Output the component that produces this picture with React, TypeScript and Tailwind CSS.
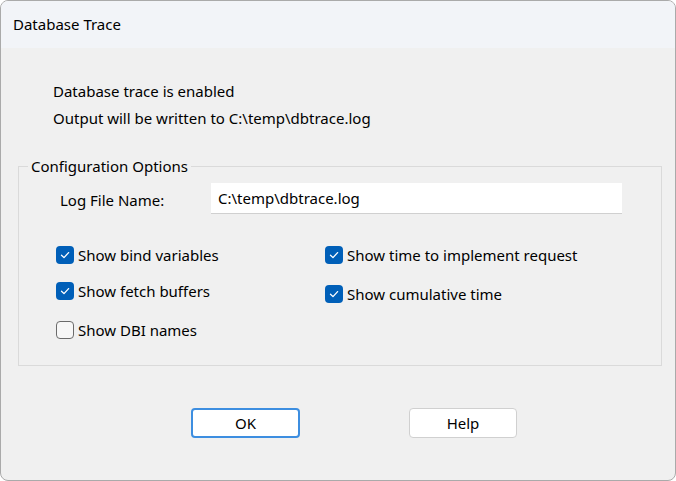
import React from "react";

function Check({ checked }: { checked: boolean }) {
  if (checked) {
    return (
      <span className="flex h-[18px] w-[18px] shrink-0 items-center justify-center rounded-[4px] bg-[#005fb8]">
        <svg width="12" height="12" viewBox="0 0 12 12" fill="none">
          <path d="M2.5 6.2 L5 8.6 L9.6 3.6" stroke="#ffffff" strokeWidth="1.3" strokeLinecap="round" strokeLinejoin="round" />
        </svg>
      </span>
    );
  }
  return <span className="h-[18px] w-[18px] shrink-0 rounded-[4px] border border-[#6b6b6b] bg-[#f7f7f7]" />;
}

function Option({ label, checked, className = "" }: { label: string; checked: boolean; className?: string }) {
  return (
    <div className={"flex h-[20px] items-center gap-[4px] " + className}>
      <Check checked={checked} />
      <span className="leading-none">{label}</span>
    </div>
  );
}

export default function App() {
  return (
    <div
      className="h-[481px] w-[676px] overflow-hidden rounded-[8px] border border-[#aaaaaa] bg-[#f0f0f0] text-[15px] text-[#000000]"
      style={{ fontFamily: '"Segoe UI", "Noto Sans", "Open Sans", sans-serif' }}
    >
      <div className="flex h-[47px] items-center bg-[#f2f4f8] pl-[12px]">
        <span>Database Trace</span>
      </div>
      <div className="pl-[52px] pt-[33px]">
        <div className="h-[27px] leading-[20px]">Database trace is enabled</div>
        <div className="h-[27px] leading-[20px]">Output will be written to C:\temp\dbtrace.log</div>
      </div>
      <div className="relative ml-[17px] mt-[31px] h-[200px] w-[644px] border border-[#dadada]">
        <span className="absolute left-[9px] top-[-12px] bg-[#f0f0f0] px-[3px] leading-[22px]">Configuration Options</span>
        <div className="flex items-center pt-[16px]">
          <span className="w-[192px] pl-[41px] pt-[4px]">Log File Name:</span>
          <div className="flex h-[31px] w-[411px] items-center border-b border-[#d0d0d0] bg-white pl-[7px]">
            C:\temp\dbtrace.log
          </div>
        </div>
        <div className="grid grid-cols-[269px_1fr] pl-[37px] pt-[31px]">
          <div className="flex flex-col">
            <Option label="Show bind variables" checked />
            <Option label="Show fetch buffers" checked className="mt-[16px]" />
            <Option label="Show DBI names" checked={false} className="mt-[19px]" />
          </div>
          <div className="flex flex-col">
            <Option label="Show time to implement request" checked />
            <Option label="Show cumulative time" checked className="mt-[19px]" />
          </div>
        </div>
      </div>
      <div className="flex pl-[190px] pt-[42px]">
        <button className="flex h-[30px] w-[109px] items-center justify-center rounded-[4px] border-2 border-[#3d8ee0] bg-white">
          OK
        </button>
        <button className="ml-[109px] flex h-[30px] w-[108px] items-center justify-center rounded-[4px] border border-[#d0d0d0] bg-white">
          Help
        </button>
      </div>
    </div>
  );
}
